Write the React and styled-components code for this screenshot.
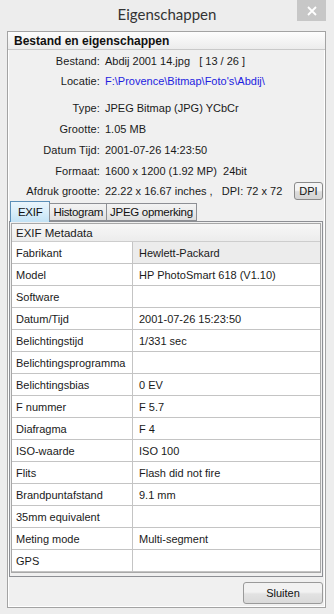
import React, { useState } from 'react';
import styled, { createGlobalStyle } from 'styled-components';

const GlobalStyle = createGlobalStyle`
  html, body {
    margin: 0;
    padding: 0;
    background: #ededed;
  }
  body {
    font-family: "Liberation Sans", Arial, sans-serif;
    font-size: 11px;
    color: #1a1a1a;
  }
`;

const Window = styled.div`
  width: 334px;
  height: 614px;
  display: flex;
  flex-direction: column;
  background: #ededed;
  overflow: hidden;
`;

const TitleBar = styled.div`
  height: 31px;
  display: grid;
  grid-template-columns: 1fr auto 1fr;
  align-items: start;
`;

const Title = styled.div`
  grid-column: 2;
  font-family: Lato, "Liberation Sans", sans-serif;
  font-size: 15px;
  color: #333;
  padding-top: 5px;
`;

const CloseButton = styled.button`
  grid-column: 3;
  justify-self: end;
  margin-right: 8px;
  width: 29px;
  height: 21px;
  border: none;
  padding: 0;
  background: #c7c7c7;
  display: flex;
  align-items: center;
  justify-content: center;
`;

const Frame = styled.div`
  margin: 0 8px 0 7px;
  height: 577px;
  box-sizing: border-box;
  border: 1px solid #a3a3a3;
  box-shadow: inset 1px 1px 0 #fff, inset -1px -1px 0 #fff;
  background: #f0f0f0;
  display: flex;
  flex-direction: column;
`;

const GroupHeader = styled.div`
  height: 17px;
  border-bottom: 1px solid #c9c9c9;
  background: linear-gradient(#fdfdfd, #ececec);
  font-weight: bold;
  font-size: 12px;
  padding-left: 6px;
  line-height: 18px;
  color: #111;
`;

const InfoList = styled.div`
  padding-top: 1px;
  display: flex;
  flex-direction: column;
`;

const InfoRow = styled.div`
  height: ${({ h }) => h || 21}px;
  margin-top: ${({ gap }) => gap || 0}px;
  display: grid;
  grid-template-columns: 92px 1fr;
  column-gap: 5px;
  align-items: center;
`;

const Label = styled.span`
  text-align: right;
  letter-spacing: 0.1px;
`;

const Value = styled.span`
  white-space: pre;
  color: ${({ link }) => (link ? '#1e1ee0' : 'inherit')};
  display: flex;
  align-items: center;
  justify-content: space-between;
`;

const SmallButton = styled.button`
  font-family: inherit;
  font-size: 11px;
  color: #111;
  height: 18px;
  width: 29px;
  padding: 0;
  margin-right: 2px;
  border: 1px solid #8a8a8a;
  border-radius: 3px;
  background: linear-gradient(#f4f4f4 45%, #dcdcdc 55%, #d4d4d4);
`;

const TabStrip = styled.div`
  height: 20px;
  display: flex;
  align-items: flex-end;
  padding-left: 2px;
  position: relative;
  z-index: 1;
`;

const Tab = styled.div`
  box-sizing: border-box;
  height: ${({ active }) => (active ? 21 : 18)}px;
  margin-bottom: ${({ active }) => (active ? -1 : 0)}px;
  padding: 0 ${({ active }) => (active ? 7 : 3)}px;
  border: 1px solid ${({ active }) => (active ? '#5b8fb8' : '#8d8f94')};
  border-bottom: ${({ active }) => (active ? 'none' : '1px solid #8d8f94')};
  margin-left: ${({ first }) => (first ? 0 : -1)}px;
  background: ${({ active }) =>
    active
      ? 'linear-gradient(#eaf5fc, #d9eefa 50%, #c3e2f5)'
      : 'linear-gradient(#f3f3f3, #ebebeb 50%, #dedede)'};
  display: flex;
  align-items: center;
  font-size: 11.5px;
  letter-spacing: -0.3px;
  color: #111;
`;

const TabPanel = styled.div`
  flex: 1;
  margin: 0 2px 0 1px;
  border: 1px solid #8d8f94;
  padding: 1px;
  display: flex;
  flex-direction: column;
`;

const Grid = styled.div`
  border: 1px solid #a8a8a8;
  box-shadow: inset 1px 1px 0 #fff;
  background: #fff;
  display: flex;
  flex-direction: column;
`;

const GridHeader = styled.div`
  height: 17px;
  border-bottom: 1px solid #cdcdcd;
  background: linear-gradient(#f7f7f7, #ececec);
  padding-left: 4px;
  line-height: 18px;
  font-size: 11.5px;
`;

const GridRow = styled.div`
  height: 22px;
  box-sizing: border-box;
  display: grid;
  grid-template-columns: 121px 1fr;
  border-bottom: 1px solid #c4c4c4;
`;

const Cell = styled.div`
  display: flex;
  align-items: center;
  padding-left: ${({ value }) => (value ? 6 : 4)}px;
  border-right: ${({ value }) => (value ? 'none' : '1px solid #c4c4c4')};
  background: ${({ selected }) => (selected ? '#ececec' : '#fff')};
  font-size: 11px;
  white-space: nowrap;
  overflow: hidden;
`;

const Footer = styled.div`
  height: 30px;
  display: flex;
  justify-content: flex-end;
  align-items: flex-start;
  padding: 5px 2px 0 0;
  box-sizing: border-box;
`;

const DialogButton = styled.button`
  width: 80px;
  height: 22px;
  font-family: inherit;
  font-size: 11px;
  color: #111;
  border: 1px solid #9a9a9a;
  border-radius: 3px;
  background: linear-gradient(#f2f2f2 45%, #e2e2e2 55%, #dadada);
`;

const exif = [
  ['Fabrikant', 'Hewlett-Packard'],
  ['Model', 'HP PhotoSmart 618 (V1.10)'],
  ['Software', ''],
  ['Datum/Tijd', '2001-07-26 15:23:50'],
  ['Belichtingstijd', '1/331 sec'],
  ['Belichtingsprogramma', ''],
  ['Belichtingsbias', '0 EV'],
  ['F nummer', 'F 5.7'],
  ['Diafragma', 'F 4'],
  ['ISO-waarde', 'ISO 100'],
  ['Flits', 'Flash did not fire'],
  ['Brandpuntafstand', '9.1 mm'],
  ['35mm equivalent', ''],
  ['Meting mode', 'Multi-segment'],
  ['GPS', ''],
];

const tabs = ['EXIF', 'Histogram', 'JPEG opmerking'];

export default function App() {
  const [tab, setTab] = useState('EXIF');

  return (
    <Window>
      <GlobalStyle />
      <TitleBar>
        <Title>Eigenschappen</Title>
        <CloseButton aria-label="Sluiten">
          <svg width="10" height="10" viewBox="0 0 10 10">
            <path d="M1 1L9 9M9 1L1 9" stroke="#fff" strokeWidth="1.8" />
          </svg>
        </CloseButton>
      </TitleBar>

      <Frame>
        <GroupHeader>Bestand en eigenschappen</GroupHeader>
        <InfoList>
          <InfoRow h={20}>
            <Label>Bestand:</Label>
            <Value>Abdij 2001 14.jpg   [ 13 / 26 ]</Value>
          </InfoRow>
          <InfoRow h={20}>
            <Label>Locatie:</Label>
            <Value link>F:\Provence\Bitmap\Foto's\Abdij\</Value>
          </InfoRow>
          <InfoRow gap={6}>
            <Label>Type:</Label>
            <Value>JPEG Bitmap (JPG) YCbCr</Value>
          </InfoRow>
          <InfoRow>
            <Label>Grootte:</Label>
            <Value>1.05 MB</Value>
          </InfoRow>
          <InfoRow>
            <Label>Datum Tijd:</Label>
            <Value>2001-07-26 14:23:50</Value>
          </InfoRow>
          <InfoRow>
            <Label>Formaat:</Label>
            <Value>1600 x 1200 (1.92 MP)  24bit</Value>
          </InfoRow>
          <InfoRow h={20}>
            <Label>Afdruk grootte:</Label>
            <Value>
              <span>22.22 x 16.67 inches ,   DPI: 72 x 72</span>
              <SmallButton>DPI</SmallButton>
            </Value>
          </InfoRow>
        </InfoList>

        <TabStrip>
          {tabs.map((t, i) => (
            <Tab key={t} first={i === 0} active={tab === t} onClick={() => setTab(t)}>
              {t}
            </Tab>
          ))}
        </TabStrip>
        <TabPanel>
          <Grid>
            <GridHeader>EXIF Metadata</GridHeader>
            {exif.map(([name, val], i) => (
              <GridRow key={name}>
                <Cell>{name}</Cell>
                <Cell value selected={i === 0}>
                  {val}
                </Cell>
              </GridRow>
            ))}
          </Grid>
        </TabPanel>

        <Footer>
          <DialogButton>Sluiten</DialogButton>
        </Footer>
      </Frame>
    </Window>
  );
}
